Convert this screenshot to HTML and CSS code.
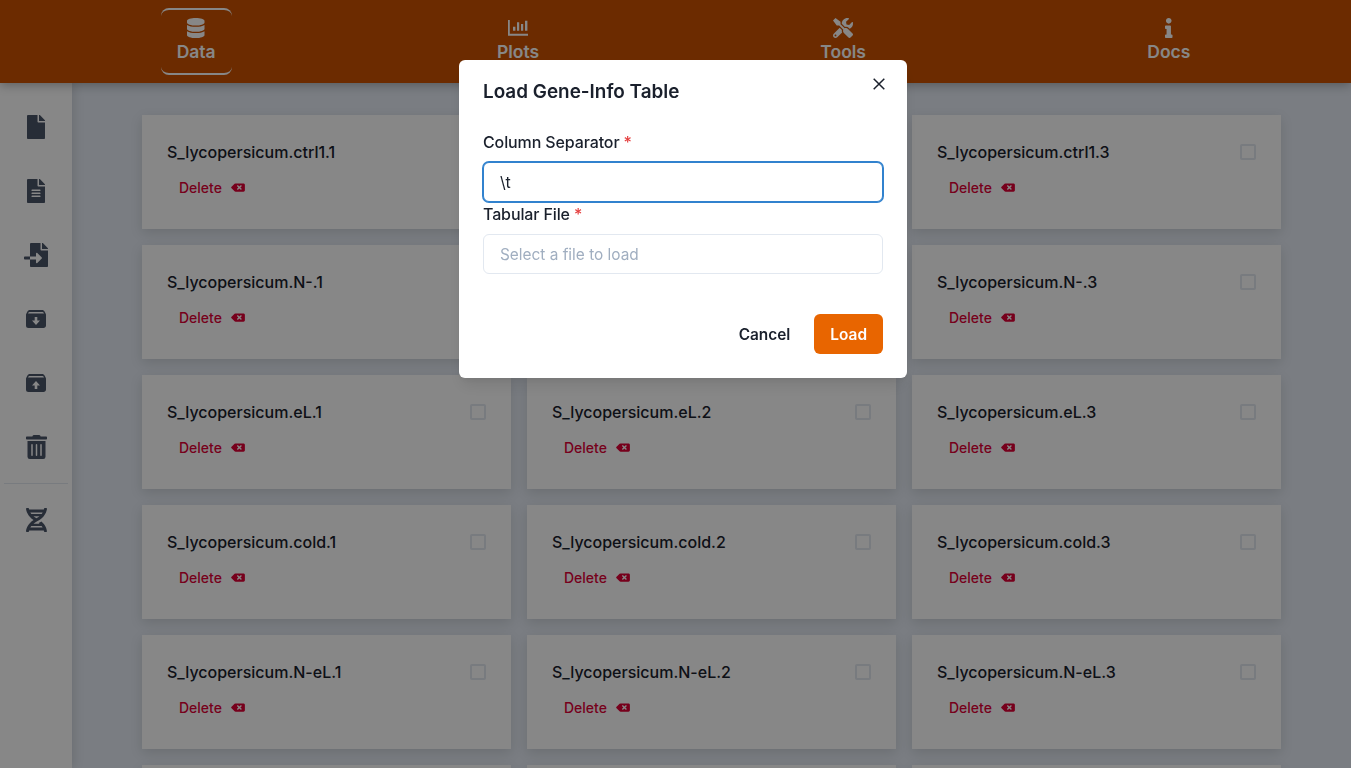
FILE: index.html
```html
<!DOCTYPE html>
<html lang="en">
  <head>
    <meta charset="UTF-8" />
    <title>Load Gene-Info Table</title>
    <link rel="stylesheet" href="styles.css">
  </head>
  <body>
    <svg class="sprites" width="0" height="0">
      <symbol id="i-backspace" viewBox="0 0 640 512"><path d="M576 64H205.26A63.97 63.97 0 0 0 160 82.75L9.37 233.37c-12.5 12.5-12.5 32.76 0 45.25L160 429.25c12 12 28.28 18.75 45.25 18.75H576c35.35 0 64-28.65 64-64V128c0-35.35-28.65-64-64-64zm-84.69 254.06c6.25 6.25 6.25 16.38 0 22.63l-22.62 22.62c-6.25 6.25-16.38 6.25-22.63 0L384 301.25l-62.06 62.06c-6.25 6.25-16.38 6.25-22.63 0l-22.62-22.62c-6.25-6.25-6.25-16.38 0-22.63L338.75 256l-62.06-62.06c-6.25-6.25-6.25-16.38 0-22.63l22.62-22.62c6.25-6.25 16.38-6.25 22.63 0L384 210.75l62.06-62.06c6.25-6.25 16.38-6.25 22.63 0l22.62 22.62c6.25 6.25 6.25 16.38 0 22.63L429.25 256l62.06 62.06z"/></symbol>
    </svg>

    <header class="topbar">
      <a class="tab tab-active">
        <svg class="tab-icon" viewBox="0 0 448 512"><path d="M448 73.143v45.714C448 159.143 347.667 192 224 192S0 159.143 0 118.857V73.143C0 32.857 100.333 0 224 0s224 32.857 224 73.143zM448 176v102.857C448 319.143 347.667 352 224 352S0 319.143 0 278.857V176c48.125 33.143 136.208 48.572 224 48.572S399.874 209.143 448 176zm0 160v102.857C448 479.143 347.667 512 224 512S0 479.143 0 438.857V336c48.125 33.143 136.208 48.572 224 48.572S399.874 369.143 448 336z"/></svg>
        <span>Data</span>
      </a>
      <a class="tab">
        <svg class="tab-icon" viewBox="0 0 20 20"><path d="M0 2h1.800v13.700H20v2H0zM5 8.700h2.400v4H5zM9 4.300h2.200v8.400H9zM13 6h2.200v6.700H13zM17 2.700h2.400v10H17z"/></svg>
        <span>Plots</span>
      </a>
      <a class="tab">
        <svg class="tab-icon" viewBox="0 0 512 512"><path d="M501.1 395.7L384 278.6c-23.1-23.1-57.6-27.6-85.4-13.9L192 158.1V96L64 0 0 64l96 128h62.1l106.6 106.6c-13.6 27.8-9.2 62.3 13.9 85.4l117.1 117.1c14.6 14.6 38.2 14.6 52.7 0l52.7-52.7c14.5-14.6 14.5-38.2 0-52.7zM331.7 225c28.3 0 54.9 11 74.9 31l19.4 19.4c15.8-6.9 30.8-16.5 43.8-29.5 37.1-37.1 49.7-89.3 37.9-136.7-2.2-9-13.5-12.1-20.1-5.5l-74.4 74.4-67.9-11.3L334 98.9l74.4-74.4c6.6-6.6 3.4-17.9-5.7-20.2-47.4-11.7-99.6.9-136.6 37.9-28.5 28.5-41.9 66.1-41.2 103.6l82.1 82.1c8.1-1.9 16.5-2.9 24.7-2.9zm-103.9 82l-56.7-56.7L18.7 402.8c-25 25-25 65.5 0 90.5s65.5 25 90.5 0l123.6-123.6c-7.6-19.9-9.9-41.6-5-62.7zM64 472c-13.2 0-24-10.8-24-24 0-13.3 10.7-24 24-24s24 10.7 24 24c0 13.2-10.7 24-24 24z"/></svg>
        <span>Tools</span>
      </a>
      <a class="tab">
        <svg class="tab-icon" viewBox="0 0 192 512"><path d="M20 424.229h20V279.771H20c-11.046 0-20-8.954-20-20V212c0-11.046 8.954-20 20-20h112c11.046 0 20 8.954 20 20v212.229h20c11.046 0 20 8.954 20 20V492c0 11.046-8.954 20-20 20H20c-11.046 0-20-8.954-20-20v-47.771c0-11.046 8.954-20 20-20zM96 0C56.235 0 24 32.235 24 72s32.235 72 72 72 72-32.235 72-72S135.764 0 96 0z"/></svg>
        <span>Docs</span>
      </a>
    </header>

    <div class="layout">
      <nav class="sidebar">
        <div class="side-slot">
          <svg class="icon-file" viewBox="0 0 384 512"><path d="M224 136V0H24C10.7 0 0 10.7 0 24v464c0 13.3 10.7 24 24 24h336c13.3 0 24-10.7 24-24V160H248c-13.2 0-24-10.8-24-24zm160-14.1v6.1H256V0h6.1c6.4 0 12.5 2.5 17 7l97.9 98c4.5 4.5 7 10.6 7 16.9z"/></svg>
        </div>
        <div class="side-slot">
          <svg class="icon-file" viewBox="0 0 384 512"><path d="M224 136V0H24C10.7 0 0 10.7 0 24v464c0 13.3 10.7 24 24 24h336c13.3 0 24-10.7 24-24V160H248c-13.2 0-24-10.8-24-24zm64 236c0 6.6-5.4 12-12 12H108c-6.6 0-12-5.4-12-12v-8c0-6.6 5.4-12 12-12h168c6.6 0 12 5.4 12 12v8zm0-64c0 6.6-5.4 12-12 12H108c-6.6 0-12-5.4-12-12v-8c0-6.6 5.4-12 12-12h168c6.6 0 12 5.4 12 12v8zm0-72v8c0 6.6-5.4 12-12 12H108c-6.6 0-12-5.4-12-12v-8c0-6.6 5.4-12 12-12h168c6.6 0 12 5.4 12 12zm96-114.1v6.1H256V0h6.1c6.4 0 12.5 2.5 17 7l97.9 98c4.5 4.5 7 10.6 7 16.9z"/></svg>
        </div>
        <div class="side-slot">
          <svg class="icon-import" viewBox="0 0 512 512"><path d="M16 288c-8.8 0-16 7.2-16 16v32c0 8.8 7.2 16 16 16h112v-64zm489-183L407.1 7c-4.5-4.5-10.6-7-17-7H384v128h128v-6.1c0-6.3-2.5-12.4-7-16.9zm-153 31V0H152c-13.3 0-24 10.7-24 24v264h128v-65.2c0-14.3 17.3-21.4 27.4-11.3L379 308c6.6 6.7 6.6 17.4 0 24l-95.7 96.4c-10.1 10.1-27.4 3-27.4-11.3V352H128v136c0 13.3 10.7 24 24 24h336c13.3 0 24-10.7 24-24V160H376c-13.2 0-24-10.8-24-24z"/></svg>
        </div>
        <div class="side-slot">
          <svg class="icon-archive" viewBox="0 0 20 18"><path fill-rule="evenodd" d="M4 0h12c1.2 0 2.2.7 2.7 1.7l1 2c.2.4.3.8.3 1.3v10.5c0 1.4-1.1 2.5-2.5 2.5h-15A2.500 2.500 0 0 1 0 15.500V5c0-.5.1-.9.3-1.300l1-2C1.800.7 2.800 0 4 0zM3.500 2c-.5 0-.8.3-1 .6L2 3.500h16l-.5-.9c-.2-.3-.5-.6-1-.6zM8.700 7v3.500H6l4 4.500 4-4.500h-2.700V7z"/></svg>
        </div>
        <div class="side-slot">
          <svg class="icon-archive" viewBox="0 0 20 18"><path fill-rule="evenodd" d="M4 0h12c1.2 0 2.2.7 2.7 1.7l1 2c.2.4.3.8.3 1.3v10.5c0 1.4-1.1 2.5-2.5 2.5h-15A2.500 2.500 0 0 1 0 15.500V5c0-.5.1-.9.3-1.300l1-2C1.800.7 2.800 0 4 0zM3.500 2c-.5 0-.8.3-1 .6L2 3.500h16l-.5-.9c-.2-.3-.5-.6-1-.6zM10 7l-4 4.500h2.700V15h2.600v-3.500H14z"/></svg>
        </div>
        <div class="side-slot">
          <svg class="icon-trash" viewBox="0 0 448 512"><path d="M32 464a48 48 0 0 0 48 48h288a48 48 0 0 0 48-48V128H32zm272-256a16 16 0 0 1 32 0v224a16 16 0 0 1-32 0zm-96 0a16 16 0 0 1 32 0v224a16 16 0 0 1-32 0zm-96 0a16 16 0 0 1 32 0v224a16 16 0 0 1-32 0zM432 32H312l-9.400-18.700A24 24 0 0 0 281.100 0H166.800a23.720 23.720 0 0 0-21.400 13.300L136 32H16A16 16 0 0 0 0 48v32a16 16 0 0 0 16 16h416a16 16 0 0 0 16-16V48a16 16 0 0 0-16-16z"/></svg>
        </div>
        <hr class="side-rule" />
        <div class="side-slot">
          <svg class="icon-trash" viewBox="0 0 448 512"><path d="M.1 494.1c-1.100 9.500 6.300 17.800 15.900 17.800l32.300.1c8.100 0 14.900-5.900 16-13.900.7-4.900 1.800-11.100 3.400-18.100H380c1.600 6.900 2.900 13.200 3.500 18.100 1.100 8 7.900 14 16 13.900l32.300-.1c9.600 0 17.100-8.300 15.900-17.800-4.600-37.900-25.600-129-118.900-207.700-17.600 12.400-37.100 24.200-58.500 35.400 6.200 4.600 11.400 9.400 17 14.200H159.700c21.300-18.100 47-35.600 78.700-51.400C410.500 199.100 442.100 65.800 447.900 17.900 449 8.400 441.600.1 432 .1L399.600 0c-8.100 0-14.900 5.900-16 13.900-.7 4.900-1.800 11.100-3.400 18.100H67.800c-1.600-7-2.700-13.100-3.400-18.100-1.100-8-7.900-14-16-13.900L16.100.1C6.500.1-1 8.400.1 17.900 5.300 60.800 31.400 171.800 160 256 31.500 340.200 5.300 451.200.1 494.100zM224 219.600c-25.100-13.700-46.400-28.400-64.300-43.600h128.500c-17.800 15.200-39.100 30-64.200 43.600zM355.100 96c-5.800 10.400-12.800 21.100-21 32H114c-8.300-10.900-15.300-21.600-21-32h262.100zM92.900 416c5.800-10.400 12.800-21.100 21-32h219.400c8.300 10.900 15.400 21.600 21.200 32H92.900z"/></svg>
        </div>
      </nav>

      <main class="samples">
        <div class="card"><div class="card-head"><span>S_lycopersicum.ctrl1.1</span><i class="check"></i></div><button class="del">Delete <svg class="del-icon"><use href="#i-backspace"/></svg></button></div>
        <div class="card"><div class="card-head"><span>S_lycopersicum.ctrl1.2</span><i class="check"></i></div><button class="del">Delete <svg class="del-icon"><use href="#i-backspace"/></svg></button></div>
        <div class="card"><div class="card-head"><span>S_lycopersicum.ctrl1.3</span><i class="check"></i></div><button class="del">Delete <svg class="del-icon"><use href="#i-backspace"/></svg></button></div>

        <div class="card"><div class="card-head"><span>S_lycopersicum.N-.1</span><i class="check"></i></div><button class="del">Delete <svg class="del-icon"><use href="#i-backspace"/></svg></button></div>
        <div class="card"><div class="card-head"><span>S_lycopersicum.N-.2</span><i class="check"></i></div><button class="del">Delete <svg class="del-icon"><use href="#i-backspace"/></svg></button></div>
        <div class="card"><div class="card-head"><span>S_lycopersicum.N-.3</span><i class="check"></i></div><button class="del">Delete <svg class="del-icon"><use href="#i-backspace"/></svg></button></div>

        <div class="card"><div class="card-head"><span>S_lycopersicum.eL.1</span><i class="check"></i></div><button class="del">Delete <svg class="del-icon"><use href="#i-backspace"/></svg></button></div>
        <div class="card"><div class="card-head"><span>S_lycopersicum.eL.2</span><i class="check"></i></div><button class="del">Delete <svg class="del-icon"><use href="#i-backspace"/></svg></button></div>
        <div class="card"><div class="card-head"><span>S_lycopersicum.eL.3</span><i class="check"></i></div><button class="del">Delete <svg class="del-icon"><use href="#i-backspace"/></svg></button></div>

        <div class="card"><div class="card-head"><span>S_lycopersicum.cold.1</span><i class="check"></i></div><button class="del">Delete <svg class="del-icon"><use href="#i-backspace"/></svg></button></div>
        <div class="card"><div class="card-head"><span>S_lycopersicum.cold.2</span><i class="check"></i></div><button class="del">Delete <svg class="del-icon"><use href="#i-backspace"/></svg></button></div>
        <div class="card"><div class="card-head"><span>S_lycopersicum.cold.3</span><i class="check"></i></div><button class="del">Delete <svg class="del-icon"><use href="#i-backspace"/></svg></button></div>

        <div class="card"><div class="card-head"><span>S_lycopersicum.N-eL.1</span><i class="check"></i></div><button class="del">Delete <svg class="del-icon"><use href="#i-backspace"/></svg></button></div>
        <div class="card"><div class="card-head"><span>S_lycopersicum.N-eL.2</span><i class="check"></i></div><button class="del">Delete <svg class="del-icon"><use href="#i-backspace"/></svg></button></div>
        <div class="card"><div class="card-head"><span>S_lycopersicum.N-eL.3</span><i class="check"></i></div><button class="del">Delete <svg class="del-icon"><use href="#i-backspace"/></svg></button></div>

        <!-- next row is cut off by the window, only its top edge shows -->
        <div class="card"></div>
        <div class="card"></div>
        <div class="card"></div>
      </main>
    </div>

    <div class="overlay">
      <section class="modal">
        <h2 class="modal-title">Load Gene-Info Table</h2>
        <svg class="modal-close" viewBox="0 0 12 12"><path d="M.7.7l10.600 10.600M11.300.7L.7 11.300"/></svg>
        <form class="modal-form">
          <label class="field-label" for="sep">Column Separator <b class="req">*</b></label>
          <input class="field field-focus" id="sep" type="text" value="\t" />
          <label class="field-label field-label-next" for="file">Tabular File <b class="req">*</b></label>
          <input class="field" id="file" type="text" placeholder="Select a file to load" />
        </form>
        <div class="modal-foot">
          <button class="btn">Cancel</button>
          <button class="btn btn-load">Load</button>
        </div>
      </section>
    </div>
  </body>
</html>
```

FILE: styles.css
```css
body,
html {
  margin: 0;
  padding: 0;
  height: 768px;
  overflow: hidden;
}
body {
  display: flex;
  flex-direction: column;
  font-family: "Inter", "Liberation Sans", sans-serif;
  color: #2d3748;
  background-color: #e6ecf5;
}
.sprites {
  position: absolute;
}

/* top nav */
.topbar {
  flex: none;
  position: relative;
  z-index: 2;
  height: 83px;
  box-sizing: border-box;
  padding: 8px 20px 0 36px;
  display: flex;
  justify-content: space-around;
  align-items: flex-start;
  background-color: #cc5200;
  box-shadow: 0 2px 10px rgba(0, 0, 0, 0.3);
}
.tab {
  display: flex;
  flex-direction: column;
  align-items: center;
  padding: 8px 16px;
  border-top: 2px solid transparent;
  border-bottom: 2px solid transparent;
  border-radius: 8px;
  color: #ffffff;
  font-size: 17.5px;
  line-height: 27px;
  font-weight: 600;
}
.tab-active {
  border-color: #ffffff;
}
.tab-icon {
  display: block;
  height: 20px;
  fill: currentColor;
}

/* left icons */
.layout {
  flex: 1;
  display: flex;
  min-height: 0;
}
.sidebar {
  flex: none;
  position: relative;
  z-index: 1;
  width: 72px;
  padding-top: 12px;
  background-color: #ffffff;
  box-shadow: 2px 0 10px rgba(0, 0, 0, 0.12);
}
.side-slot {
  height: 64px;
  display: flex;
  align-items: center;
  justify-content: center;
}
.side-slot svg {
  fill: #4a5568;
}
.icon-file {
  width: 18px;
  height: 24px;
}
.icon-import {
  width: 24px;
  height: 24px;
}
.icon-archive {
  width: 20px;
  height: 18px;
}
.icon-trash {
  width: 21px;
  height: 24px;
}
.side-rule {
  margin: 4px;
  border: 0;
  border-top: 1px solid #e2e8f0;
}

/* sample cards */
.samples {
  flex: 1;
  min-width: 0;
  padding: 32px 70px;
  display: grid;
  grid-template-columns: repeat(3, 1fr);
  grid-auto-rows: 114px;
  gap: 16px;
}
.card {
  box-sizing: border-box;
  padding: 25px 25px 0;
  background-color: #ffffff;
  box-shadow: 0 4px 12px rgba(0, 0, 0, 0.12);
}
.card-head {
  display: flex;
  justify-content: space-between;
  align-items: center;
  height: 24px;
  font-size: 16px;
  font-weight: 500;
  color: #1a202c;
}
.check {
  width: 16px;
  height: 16px;
  box-sizing: border-box;
  border: 2px solid #e2e8f0;
  border-radius: 2px;
}
.del {
  display: flex;
  align-items: center;
  gap: 9px;
  height: 32px;
  margin-top: 7px;
  padding: 0 12px;
  border: 0;
  background: none;
  font-family: inherit;
  font-size: 14px;
  font-weight: 500;
  color: #e00036;
}
.del-icon {
  width: 14px;
  height: 11px;
  fill: currentColor;
}

/* modal */
.overlay {
  position: fixed;
  inset: 0;
  z-index: 10;
  display: flex;
  justify-content: center;
  align-items: flex-start;
  padding: 60px 0 0 15px;
  background-color: rgba(0, 0, 0, 0.47);
}
.modal {
  position: relative;
  width: 448px;
  box-sizing: border-box;
  background-color: #ffffff;
  border-radius: 6px;
  box-shadow: 0 10px 15px -3px rgba(0, 0, 0, 0.1), 0 4px 6px -2px rgba(0, 0, 0, 0.05);
}
.modal-title {
  margin: 0;
  padding: 17px 24px 15px;
  font-size: 18.9px;
  line-height: 30px;
  font-weight: 600;
  color: #1a202c;
}
.modal-close {
  position: absolute;
  top: 18px;
  right: 22px;
  width: 12px;
  height: 12px;
  fill: none;
  stroke: #1a202c;
  stroke-width: 1.500;
}
.modal-form {
  padding: 8px 24px;
  display: flex;
  flex-direction: column;
}
.field-label {
  margin-bottom: 8px;
  font-size: 16px;
  letter-spacing: -0.12px;
  line-height: 24px;
  font-weight: 500;
  color: #1a202c;
}
.req {
  color: #e53e3e;
  font-weight: 500;
}
.field {
  height: 40px;
  box-sizing: border-box;
  padding: 0 16px;
  border: 1px solid #e2e8f0;
  border-radius: 6px;
  outline: 0;
  font-family: inherit;
  font-size: 16px;
  color: #1a202c;
}
.field::placeholder {
  color: #a0aec0;
  font-size: 15.4px;
}
.field-focus {
  border-color: #3182ce;
  box-shadow: 0 0 0 1px #3182ce;
}
.modal-foot {
  display: flex;
  justify-content: flex-end;
  gap: 8px;
  padding: 32px 24px 24px;
}
.btn {
  height: 40px;
  padding: 0 16px;
  border: 0;
  border-radius: 6px;
  background: none;
  font-family: inherit;
  font-size: 15.4px;
  font-weight: 600;
  color: #1a202c;
}
.btn-load {
  background-color: #e86500;
  color: #ffffff;
}
```
